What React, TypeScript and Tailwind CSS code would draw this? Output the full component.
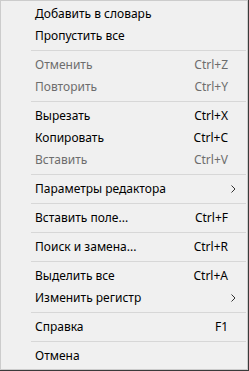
type Entry =
  | { kind: "item"; label: string; shortcut?: string; disabled?: boolean; submenu?: boolean }
  | { kind: "sep" };

const entries: Entry[] = [
  { kind: "item", label: "Добавить в словарь" },
  { kind: "item", label: "Пропустить все" },
  { kind: "sep" },
  { kind: "item", label: "Отменить", shortcut: "Ctrl+Z", disabled: true },
  { kind: "item", label: "Повторить", shortcut: "Ctrl+Y", disabled: true },
  { kind: "sep" },
  { kind: "item", label: "Вырезать", shortcut: "Ctrl+X" },
  { kind: "item", label: "Копировать", shortcut: "Ctrl+C" },
  { kind: "item", label: "Вставить", shortcut: "Ctrl+V", disabled: true },
  { kind: "sep" },
  { kind: "item", label: "Параметры редактора", submenu: true },
  { kind: "sep" },
  { kind: "item", label: "Вставить поле...", shortcut: "Ctrl+F" },
  { kind: "sep" },
  { kind: "item", label: "Поиск и замена...", shortcut: "Ctrl+R" },
  { kind: "sep" },
  { kind: "item", label: "Выделить все", shortcut: "Ctrl+A" },
  { kind: "item", label: "Изменить регистр", submenu: true },
  { kind: "sep" },
  { kind: "item", label: "Справка", shortcut: "F1" },
  { kind: "sep" },
  { kind: "item", label: "Отмена" },
];

function Chevron() {
  return (
    <svg width="5" height="8" viewBox="0 0 5 8" className="text-[#333]">
      <polyline points="0.5,0.5 4,4 0.5,7.5" fill="none" stroke="currentColor" strokeWidth="1" />
    </svg>
  );
}

export default function App() {
  return (
    <div className="h-[371px] w-[249px] border-b border-r border-[#3a3a3a] font-['Noto_Sans','Segoe_UI',sans-serif] text-[12px]">
      <div className="h-full w-full border border-[#cccccc] bg-[#f0f0f0] pt-[2px]">
        {entries.map((e, i) =>
          e.kind === "sep" ? (
            <div key={i} className="ml-[30px] mr-[1px] flex h-[7px] items-center">
              <div className="h-px w-full bg-[#d7d7d7]" />
            </div>
          ) : (
            <div
              key={i}
              className={`flex h-[22px] items-center justify-between pl-[34px] ${
                e.submenu ? "pr-[11px]" : "pr-[19px]"
              } ${e.disabled ? "text-[#6d6d6d]" : "text-black"}`}
            >
              <span>{e.label}</span>
              {e.shortcut && <span>{e.shortcut}</span>}
              {e.submenu && <Chevron />}
            </div>
          ),
        )}
      </div>
    </div>
  );
}
